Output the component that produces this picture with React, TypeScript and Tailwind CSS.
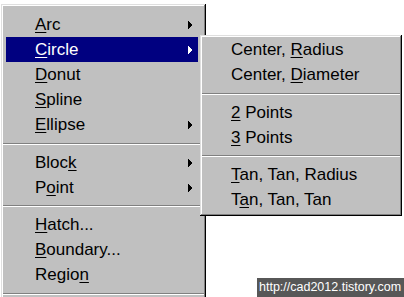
import React from "react";

const Arrow = ({ white }: { white?: boolean }) => (
  <svg width="5" height="8" viewBox="0 0 5 8" shapeRendering="crispEdges">
    <polygon points="0,0 4,4 0,8" fill={white ? "#ffffff" : "#000000"} />
  </svg>
);

type Item = { pre: string; u: string; post: string; sub?: boolean; active?: boolean } | "sep";

const mainItems: Item[] = [
  { pre: "", u: "A", post: "rc", sub: true },
  { pre: "", u: "C", post: "ircle", sub: true, active: true },
  { pre: "", u: "D", post: "onut" },
  { pre: "", u: "S", post: "pline" },
  { pre: "", u: "E", post: "llipse", sub: true },
  "sep",
  { pre: "Bloc", u: "k", post: "", sub: true },
  { pre: "P", u: "o", post: "int", sub: true },
  "sep",
  { pre: "", u: "H", post: "atch..." },
  { pre: "", u: "B", post: "oundary..." },
  { pre: "Regio", u: "n", post: "" },
  "sep",
];

const subItems: Item[] = [
  { pre: "Center, ", u: "R", post: "adius" },
  { pre: "Center, ", u: "D", post: "iameter" },
  "sep",
  { pre: "", u: "2", post: " Points" },
  { pre: "", u: "3", post: " Points" },
  "sep",
  { pre: "", u: "T", post: "an, Tan, Radius" },
  { pre: "T", u: "a", post: "n, Tan, Tan" },
];

const Sep = ({ h }: { h: string }) => (
  <div className={`flex items-center ${h}`}>
    <div className="h-[2px] w-full border-t border-b border-t-[#808080] border-b-white" />
  </div>
);

const Label = ({ it }: { it: Exclude<Item, "sep"> }) => (
  <span className="whitespace-pre">
    {it.pre}
    <u className="underline decoration-1 underline-offset-[2px]">{it.u}</u>
    {it.post}
  </span>
);

const bevel =
  "shadow-[inset_-1px_-1px_0_#000000,inset_1px_1px_0_#dfdfdf,inset_-2px_-2px_0_#808080,inset_2px_2px_0_#ffffff]";

export default function App() {
  let mainSep = 0;
  let subSep = 0;
  return (
    <div
      className="relative h-[297px] w-[404px] overflow-hidden bg-white text-[17px] text-black"
      style={{ fontFamily: '"Liberation Sans", "Noto Sans CJK KR", sans-serif' }}
    >
      <div className={`ml-[1px] mt-[4px] w-[205px] bg-[#c0c0c0] px-[2px] pt-[8px] ${bevel}`}>
        {mainItems.map((it, i) => {
          if (it === "sep") {
            mainSep++;
            return <Sep key={i} h={mainSep === 2 ? "h-[12px]" : "h-[13px]"} />;
          }
          return (
            <div
              key={i}
              className={`ml-[3px] mr-[6px] flex h-[25px] items-center justify-between pl-[29px] pr-[5px] leading-[25px] ${
                it.active ? "bg-[#000080] text-white" : ""
              }`}
            >
              <Label it={it} />
              {it.sub ? <Arrow white={it.active} /> : null}
            </div>
          );
        })}
      </div>

      <div className={`absolute left-[200px] top-[35px] w-[202px] bg-[#c0c0c0] px-[2px] pb-[4px] pt-[2px] ${bevel}`}>
        {subItems.map((it, i) => {
          if (it === "sep") {
            subSep++;
            return <Sep key={i} h={subSep === 2 ? "h-[12px]" : "h-[13px]"} />;
          }
          return (
            <div key={i} className="flex h-[25px] items-center pl-[29px] leading-[25px]">
              <Label it={it} />
            </div>
          );
        })}
      </div>

      <div
        className="absolute bottom-0 right-0 h-[19px] w-[147px] bg-[#575757] pl-[2px] text-[12.5px] leading-[19px] text-white"
      >
        http://cad2012.tistory.com
      </div>
    </div>
  );
}
